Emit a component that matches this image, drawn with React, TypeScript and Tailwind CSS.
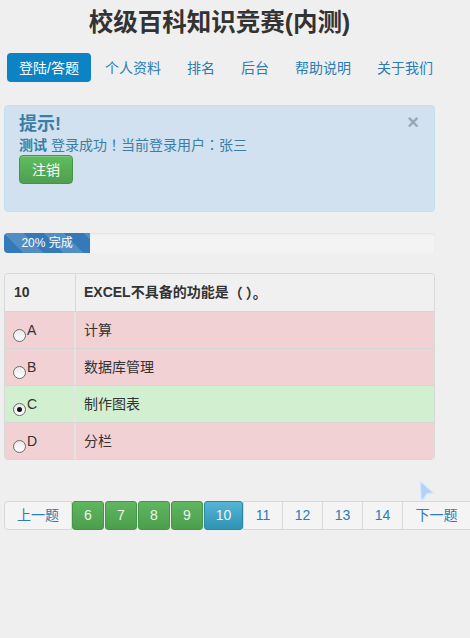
import { useState } from 'react';

const navItems = ['登陆/答题', '个人资料', '排名', '后台', '帮助说明', '关于我们'];

const options = [
  { key: 'A', text: '计算' },
  { key: 'B', text: '数据库管理' },
  { key: 'C', text: '制作图表' },
  { key: 'D', text: '分栏' },
];

const punct = { fontFamily: '"Noto Sans CJK JP", sans-serif' };

function Radio({ checked }: { checked: boolean }) {
  return (
    <span className="mt-[7px] w-[13px] h-[13px] rounded-full border border-[#6b6b6b] bg-[linear-gradient(#e9e9e9,#ffffff)] flex items-center justify-center shrink-0">
      {checked && <span className="w-[5px] h-[5px] rounded-full bg-[#111]" />}
    </span>
  );
}

export default function App() {
  const [answer, setAnswer] = useState('C');

  return (
    <div
      className="w-[470px] h-[638px] overflow-hidden bg-[#efefef] text-[#333] text-[14px]"
      style={{ fontFamily: '"Liberation Sans", "Noto Sans CJK SC", sans-serif' }}
    >
      <div className="w-[431px] ml-[4px] pt-[8px]">
        <h1 className="text-[24.5px] leading-[30px] font-bold text-center text-[#333]">校级百科知识竞赛(内测)</h1>

        {/* nav pills */}
        <div className="flex gap-[2px] mt-[15px] ml-[3px] w-[460px]">
          {navItems.map((item, i) => (
            <div
              key={item}
              className={`h-[29px] px-3 flex items-center shrink-0 whitespace-nowrap rounded-[4px] leading-[20px] ${
                i === 0 ? 'bg-[#0b83c5] text-white' : 'text-[#2a7cb4]'
              }`}
            >
              {item}
            </div>
          ))}
        </div>

        {/* alert */}
        <div className="relative mt-[23px] h-[107px] rounded-[4px] border border-[#c1e2ec] bg-[#d1e1ef] pl-[14px] pt-[7px] text-[#3a7ea6]">
          <span className="absolute right-[15px] top-[6px] text-[20px] leading-[20px] font-bold text-[#9aa6b0]">×</span>
          <div className="text-[18px] leading-[22px] font-bold">提示!</div>
          <div className="leading-[19px]">
            <b>测试</b> 登录成功<span style={punct}>！</span>当前登录用户<span style={punct}>：</span>张三
          </div>
          <button className="block h-[29px] px-3 rounded-[4px] border border-[#419641] bg-[linear-gradient(#5fbd5f,#4f9f4f)] text-white leading-[20px] shadow-[inset_0_1px_0_rgba(255,255,255,0.2)]">
            注销
          </button>
        </div>

        {/* progress */}
        <div className="mt-[21px] h-[20px] rounded-[4px] bg-[#f3f3f3] shadow-[inset_0_1px_2px_rgba(0,0,0,0.08)] overflow-hidden">
          <div className="w-[20%] h-full bg-[#3479b8] bg-[linear-gradient(45deg,rgba(255,255,255,0.15)_25%,transparent_25%,transparent_50%,rgba(255,255,255,0.15)_50%,rgba(255,255,255,0.15)_75%,transparent_75%,transparent)] bg-[length:40px_40px] text-white text-[12px] leading-[20px] text-center">
            20% 完成
          </div>
        </div>

        {/* question table */}
        <div className="mt-[20px] rounded-[4px] border border-[#d8d8d8] overflow-hidden">
          <div className="flex h-[37px] bg-[#f0f0f0] font-bold">
            <div className="w-[71px] border-r border-[#d8d8d8] pl-[9px] flex items-center">10</div>
            <div className="flex-1 pl-[8px] flex items-center">
              EXCEL不具备的功能是<span style={punct}>（ ）。</span>
            </div>
          </div>
          {options.map(o => {
            const ok = o.key === answer;
            return (
              <div
                key={o.key}
                onClick={() => setAnswer(o.key)}
                className={`flex h-[37px] border-t border-[#d6d6d6] ${ok ? 'bg-[#d2efd0]' : 'bg-[#f1d1d4]'}`}
              >
                <div className="w-[71px] border-r-2 border-[#e4e4e4] pl-[8px] flex items-center">
                  <span className="flex items-start leading-[16px] mt-[3px]">
                    <Radio checked={ok} />
                    <span className="ml-[1px]">{o.key}</span>
                  </span>
                </div>
                <div className="flex-1 pl-[8px] flex items-center">{o.text}</div>
              </div>
            );
          })}
        </div>

        {/* pagination */}
        <div className="relative mt-[41px] flex h-[29px] w-[480px]">
          <svg className="absolute left-[412px] -top-[22px]" width="20" height="24" viewBox="0 0 20 24">
            <path d="M4 2 L18 14 L11 15 L7 21 L5 20 Z" fill="#b3d1f5" stroke="#dbe9fb" strokeWidth="1.5" strokeLinejoin="round" />
          </svg>
          <div className="w-[68px] flex items-center justify-center border border-[#d8d8d8] rounded-l-[4px] bg-[#f4f4f4] text-[#2a7cb4]">上一题</div>
          <div className="flex gap-[1px]">
            {[6, 7, 8, 9, 10].map(n => (
              <div
                key={n}
                className={`${n === 10 ? 'w-[39px] bg-[linear-gradient(#55b5d6,#2f93b3)] border-[#2a86a4]' : 'w-[32px] bg-[linear-gradient(#5fb75f,#4c9e4c)] border-[#46944a]'} h-[29px] rounded-[3px] border flex items-center justify-center text-[#f2f2f2]`}
              >
                {n}
              </div>
            ))}
          </div>
          {[11, 12, 13, 14].map((n, i) => (
            <div
              key={n}
              className={`w-[40px] flex items-center justify-center border-y border-r border-[#d8d8d8] bg-[#f4f4f4] text-[#2a7cb4] ${i === 0 ? 'border-l' : ''}`}
            >
              {n}
            </div>
          ))}
          <div className="w-[68px] flex items-center justify-center border-y border-r border-[#d8d8d8] bg-[#f4f4f4] text-[#2a7cb4]">下一题</div>
        </div>
      </div>
    </div>
  );
}
